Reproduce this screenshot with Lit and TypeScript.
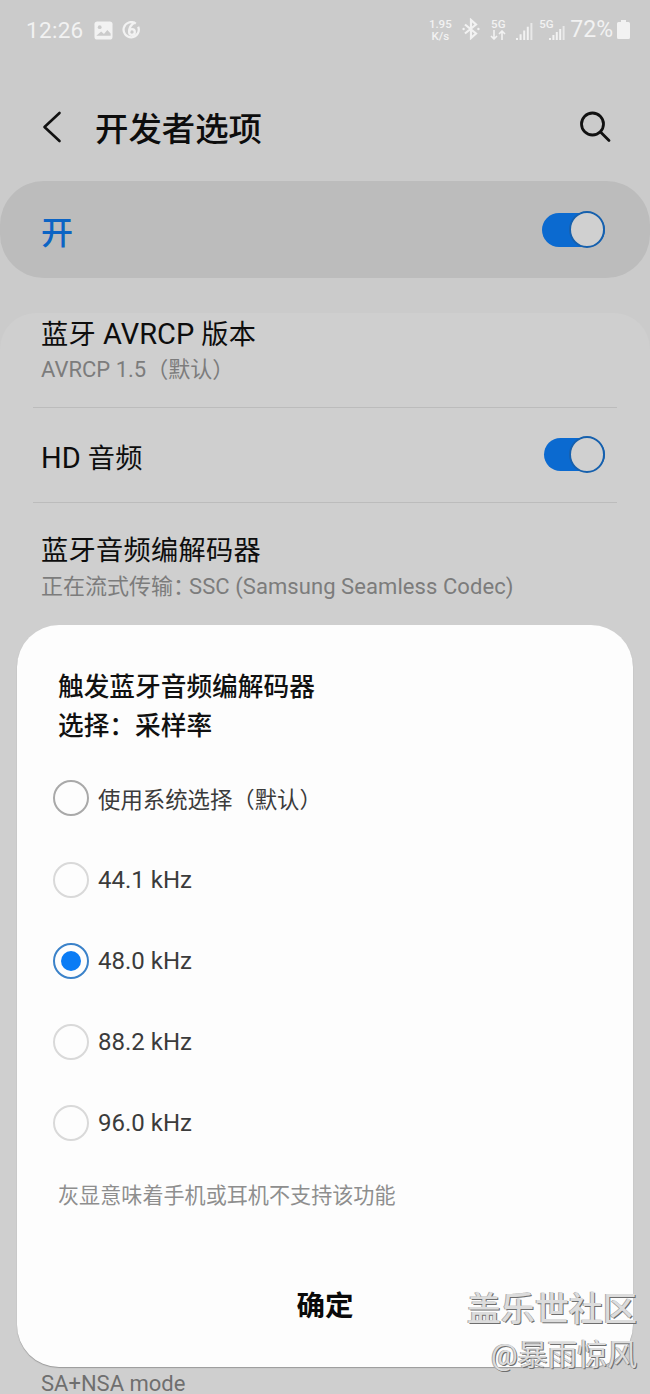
import { LitElement, html, css, svg } from "lit";
import { customElement } from "lit/decorators.js";

@customElement("app-root")
export class AppRoot extends LitElement {
  static styles = css`
    :host {
      display: block;
      position: relative;
      width: 650px;
      height: 1394px;
      overflow: hidden;
      background: #cbcbcb;
      font-family: Roboto, "Noto Sans CJK SC", sans-serif;
      color: #0d0d0d;
    }
    svg { display: block; }
    .status {
      height: 60px;
      box-sizing: border-box;
      padding: 18px 20px 0 26px;
      display: flex;
      align-items: flex-start;
      color: #f2f2f2;
    }
    .time { font-size: 22.5px; line-height: 24px; letter-spacing: 0.3px; margin-right: 10px; }
    .gallery { margin: 3px 9px 0 0; }
    .swirl { margin-top: 3px; }
    .spacer { flex: 1; }
    .speed {
      font-size: 11.5px; line-height: 12px; text-align: center; font-weight: 500;
      margin: 0 9px 0 0; width: 26px;
    }
    .bt { margin: 0 10px 0 0; }
    .stack { font-size: 11.5px; line-height: 12px; font-weight: 500; text-align: center; }
    .stack.net { margin-right: 10px; }
    .bars1 { margin: 5px 6px 0 0; }
    .sim2 { position: relative; width: 22px; height: 22px; }
    .sim2 .stack { position: absolute; left: -1px; top: 0; }
    .sim2 .bars2 { position: absolute; right: -4px; top: 8px; }
    .pct { font-size: 23px; line-height: 24px; margin-left: 8px; margin-right: 4px; }
    .battery { margin-top: 2px; }
    .appbar {
      height: 68px;
      margin-top: 33px;
      display: flex;
      align-items: center;
      padding: 0 39px 0 42px;
    }
    .appbar h1 {
      margin: 0 0 0 33px;
      padding-top: 5px;
      font-size: 33.4px;
      font-weight: 500;
      line-height: 40px;
      flex: 1;
    }
    .master {
      margin-top: 20px;
      height: 97px;
      border-radius: 44px;
      background: #bcbcbc;
      display: flex;
      align-items: center;
      justify-content: space-between;
      padding: 0 45px 0 41px;
      color: #0c64c4;
      font-size: 32px;
      font-weight: 500;
    }
    .card {
      margin-top: 35px;
      background: #cfcfcf;
      border-radius: 36px 36px 0 0;
      height: 1081px;
      box-sizing: border-box;
      padding: 0 33px;
    }
    .row { border-bottom: 1.5px solid #bcbcbc; padding: 0 8px; box-sizing: border-box; }
    .row.first { height: 95px; padding-top: 3px; }
    .row.mid { height: 95px; display: flex; align-items: center; justify-content: space-between; padding-right: 12px; }
    .row.mid .t { position: relative; top: 3px; }
    .row.codec { height: 122px; padding-top: 30px; border-bottom: none; }
    .t { font-size: 27.2px; line-height: 36px; letter-spacing: 0.3px; }
    .t .lat { font-size: 29px; letter-spacing: 0; }
    .s { font-size: 22px; line-height: 34px; color: #7c7c7c; }
    .s .pull { margin-left: -6px; letter-spacing: 0.07px; }
    .row.codec .s { margin-top: 1px; }
    .foot { margin-top: 749px; padding: 0 8px; font-size: 22px; line-height: 20px; color: #6f6f6f; }
    .switch {
      position: relative;
      width: 63px;
      height: 34px;
      border-radius: 17px;
      background: #0b6ad0;
    }
    .switch i {
      position: absolute;
      right: 0;
      top: -2px;
      border-radius: 50%;
      background: #d0d0d0;
      border: 2px solid #1660ad;
      width: 32px;
      height: 33px;
    }
    .switch.small { width: 61px; height: 33px; top: -1px; }
    .dialog {
      position: absolute;
      left: 17px;
      top: 625px;
      width: 616px;
      height: 742px;
      box-sizing: border-box;
      padding: 43px 36px 0;
      border-radius: 42px;
      background: #fdfdfd;
      box-shadow: 0 1px 1px #9a9a9a;
    }
    .dialog h2 {
      margin: 0 0 0 5px;
      font-size: 25.7px;
      line-height: 39px;
      font-weight: 500;
      color: #111;
    }
    .options { margin-top: 11px; }
    .opt {
      height: 81.2px;
      display: flex;
      align-items: center;
      gap: 9px;
      font-size: 22.4px;
      color: #3b3b3b;
    }
    .opt:first-child { height: 82px; }
    .opt.khz { font-size: 24px; }
    .radio {
      width: 36px;
      height: 36px;
      box-sizing: border-box;
      border-radius: 50%;
      border: 2px solid #d9d9d9;
      display: flex;
      align-items: center;
      justify-content: center;
      flex: none;
    }
    .radio.def { border-color: #a9a9a9; }
    .radio.on { border-color: #3b82c9; }
    .radio.on b { width: 20px; height: 20px; border-radius: 50%; background: #0a7cf5; }
    .note { margin: 18px 0 0 5px; font-size: 21.1px; line-height: 28px; color: #8e8e8e; }
    .ok {
      margin-top: 77px;
      text-align: center;
      font-size: 28.5px;
      line-height: 40px;
      font-weight: 700;
      color: #0a0a0a;
    }
    .wm {
      position: absolute;
      right: 13px;
      top: 1289px;
      text-align: right;
      color: #dcdcdc;
      text-shadow: 1px 1px 0 #6e6e6e, -1px 0 0 #a8a8a8;
    }
    .wm .a { font-size: 34px; line-height: 40px; font-weight: 500; }
    .wm .b { font-size: 29.8px; line-height: 34px; margin-top: 9px; }
  `;

  private bars(w: number, h: number) {
    const n = 5;
    return html`<svg width=${w} height=${h} viewBox="0 0 ${w} ${h}" fill="#f2f2f2">
      ${Array.from({ length: n }, (_, i) => {
        const bh = 2 + (i * (h - 2)) / (n - 1);
        return svg`<rect x=${i * (w / n)} y=${h - bh} width="2" height=${bh} opacity=${i === 4 ? 0.75 : 1}></rect>`;
      })}
    </svg>`;
  }

  private statusBar() {
    return html`<div class="status">
      <span class="time">12:26</span>
      <svg class="gallery" width="19" height="19" viewBox="0 0 20 20">
        <rect x="0.5" y="0.5" width="19" height="19" rx="3" fill="#f2f2f2"></rect>
        <circle cx="6" cy="6.5" r="2" fill="#cbcbcb"></circle>
        <path d="M2.500 15.500 7.500 11l3 2.600 3.500-4 3.500 3.600v2.300z" fill="#cbcbcb"></path>
      </svg>
      <svg class="swirl" width="19" height="19" viewBox="0 0 20 20" fill="none" stroke="#f2f2f2" stroke-width="2.400">
        <path d="M14.500 2.800A8 8 0 1 0 17 6"></path>
        <circle cx="10.500" cy="11.500" r="3"></circle>
        <path d="M7.500 11.500C7.500 7 9.500 3.500 13.500 1.500"></path>
      </svg>
      <span class="spacer"></span>
      <div class="speed">1.95<br />K/s</div>
      <svg class="bt" width="18" height="22" viewBox="0 0 18 22" fill="none" stroke="#f2f2f2" stroke-width="2.200">
        <path d="M3 6.500 14 15.500 9 20V2l5 4.500L3 15.500"></path>
        <circle cx="1.600" cy="11" r="1.200" fill="#f2f2f2" stroke="none"></circle>
        <circle cx="16.400" cy="11" r="1.200" fill="#f2f2f2" stroke="none"></circle>
      </svg>
      <div class="stack net">
        5G
        <svg width="16" height="10" viewBox="0 0 16 10" fill="none" stroke="#f2f2f2" stroke-width="1.600">
          <path d="M4 0v9M1 6l3 3 3-3M12 10V1M9 4l3-3 3 3"></path>
        </svg>
      </div>
      <div class="bars1">${this.bars(18, 17)}</div>
      <div class="sim2">
        <div class="stack">5G</div>
        <div class="bars2">${this.bars(17, 14)}</div>
      </div>
      <span class="pct">72%</span>
      <svg class="battery" width="13" height="19" viewBox="0 0 13 19">
        <path d="M4 0h5v2h2.500a1.500 1.500 0 0 1 1.500 1.500V17.500a1.500 1.500 0 0 1-1.500 1.500h-10A1.500 1.500 0 0 1 0 17.500V3.500A1.500 1.500 0 0 1 1.500 2H4z" fill="#f2f2f2"></path>
      </svg>
    </div>`;
  }

  private option(label: string, cls = "") {
    const khz = label.includes("kHz") ? "khz" : "";
    return html`<div class="opt ${khz}">
      <span class="radio ${cls}">${cls === "on" ? html`<b></b>` : ""}</span>${label}
    </div>`;
  }

  render() {
    return html`
      ${this.statusBar()}
      <div class="appbar">
        <svg width="20" height="32" viewBox="0 0 20 32" fill="none" stroke="#111" stroke-width="2.600" stroke-linecap="round" stroke-linejoin="round">
          <path d="M17.500 2 2.500 16l15 14"></path>
        </svg>
        <h1>开发者选项</h1>
        <svg width="32" height="32" viewBox="0 0 32 32" fill="none" stroke="#111" stroke-width="2.800" stroke-linecap="round">
          <circle cx="13.500" cy="13" r="11"></circle>
          <path d="M21.500 21 30 29.500"></path>
        </svg>
      </div>
      <div class="master">
        <span>开</span>
        <div class="switch"><i></i></div>
      </div>
      <div class="card">
        <div class="row first">
          <div class="t">蓝牙 <span class="lat">AVRCP</span> 版本</div>
          <div class="s">AVRCP 1.5（默认）</div>
        </div>
        <div class="row mid">
          <div class="t"><span class="lat">HD</span> 音频</div>
          <div class="switch small"><i></i></div>
        </div>
        <div class="row codec">
          <div class="t">蓝牙音频编解码器</div>
          <div class="s">正在流式传输：<span class="pull">SSC (Samsung Seamless Codec)</span></div>
        </div>
        <div class="foot">SA+NSA mode</div>
      </div>

      <div class="dialog">
        <h2>触发蓝牙音频编解码器<br />选择：采样率</h2>
        <div class="options">
          ${this.option("使用系统选择（默认）", "def")}
          ${this.option("44.1 kHz")}
          ${this.option("48.0 kHz", "on")}
          ${this.option("88.2 kHz")}
          ${this.option("96.0 kHz")}
        </div>
        <div class="note">灰显意味着手机或耳机不支持该功能</div>
        <div class="ok">确定</div>
      </div>

      <div class="wm">
        <div class="a">盖乐世社区</div>
        <div class="b">@暴雨惊风</div>
      </div>
    `;
  }
}
